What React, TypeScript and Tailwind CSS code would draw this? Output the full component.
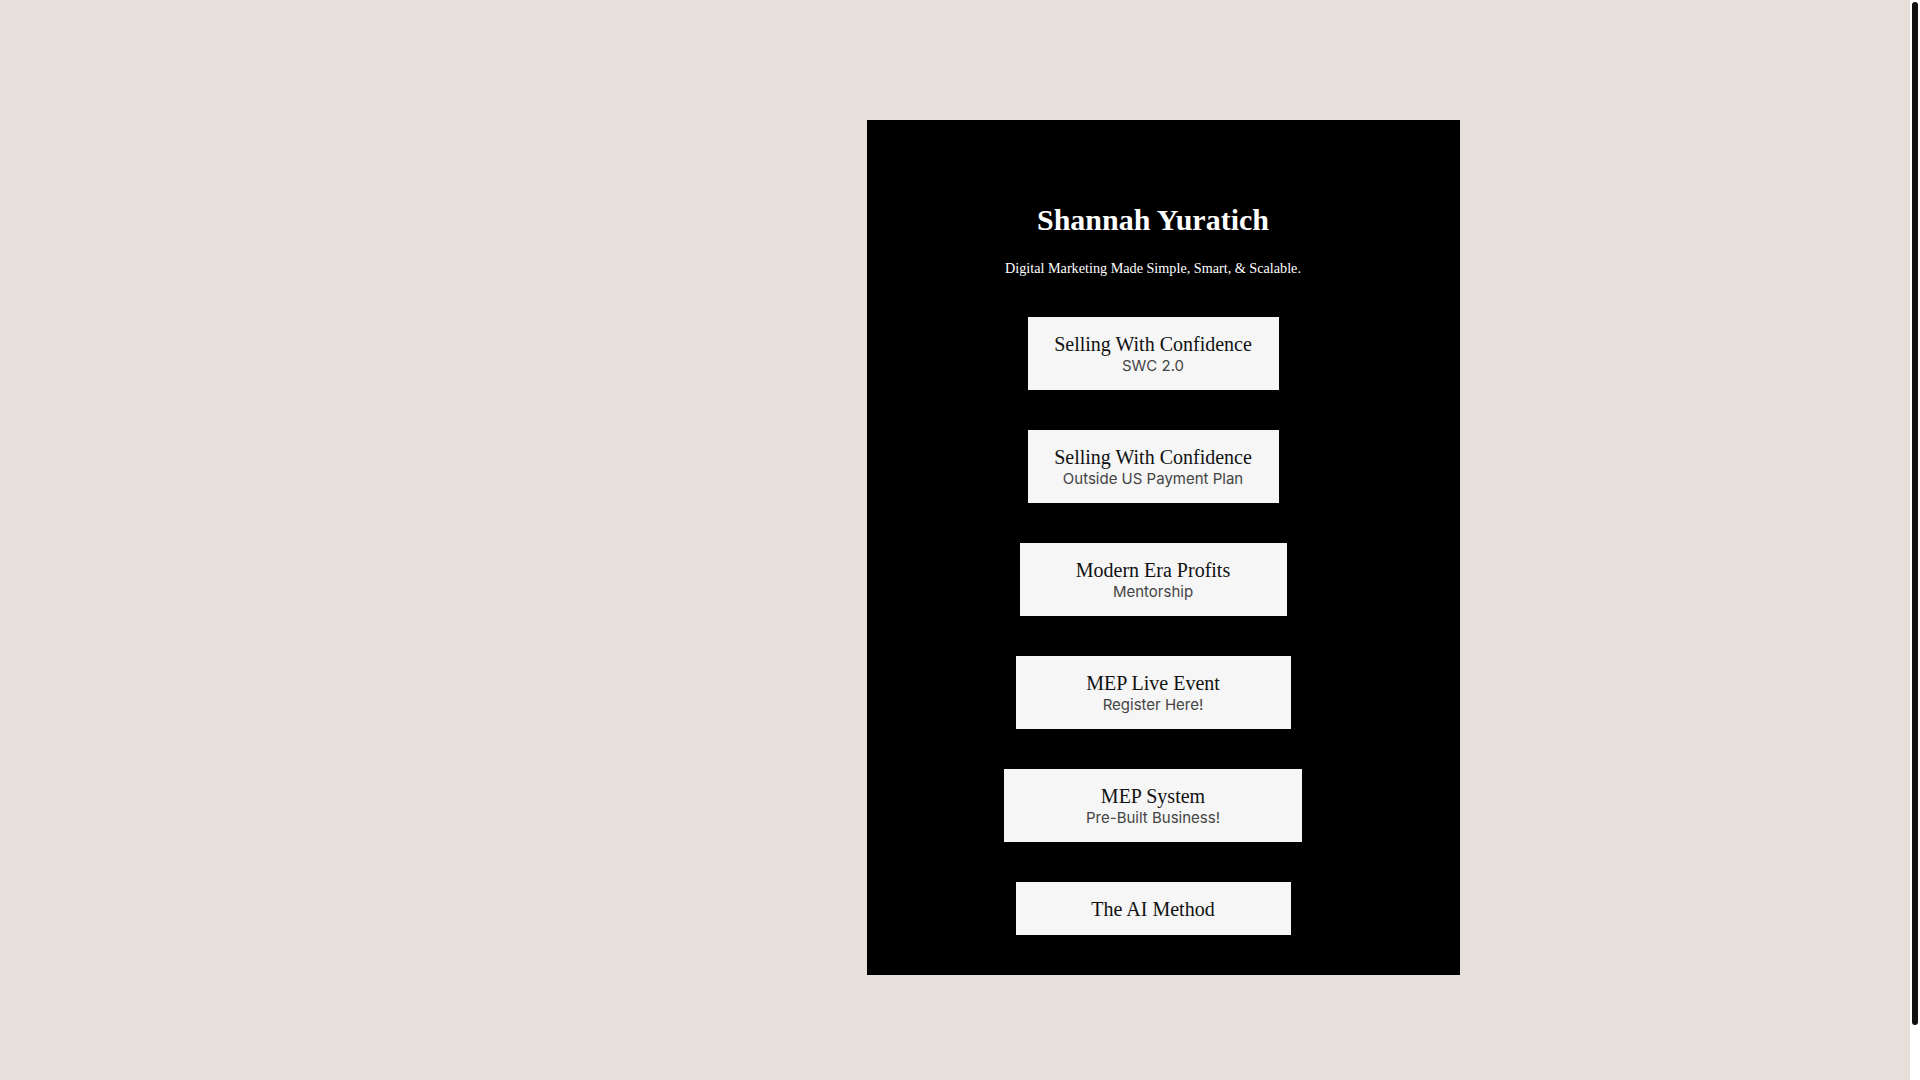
import React from "react";

type LinkItem = {
  title: string;
  subtitle?: string;
  width: string;
};

const links: LinkItem[] = [
  { title: "Selling With Confidence", subtitle: "SWC 2.0", width: "w-[251px]" },
  { title: "Selling With Confidence", subtitle: "Outside US Payment Plan", width: "w-[251px]" },
  { title: "Modern Era Profits", subtitle: "Mentorship", width: "w-[267px]" },
  { title: "MEP Live Event", subtitle: "Register Here!", width: "w-[275px]" },
  { title: "MEP System", subtitle: "Pre-Built Business!", width: "w-[298px]" },
  { title: "The AI Method", width: "w-[275px]" },
];

function LinkButton({ item }: { item: LinkItem }) {
  return (
    <a
      href="#"
      className={`${item.width} flex flex-col items-center bg-[#f6f6f6] py-[14.5px] text-center`}
    >
      <span className="font-['Liberation_Serif',serif] text-[20px] leading-6 text-[#111]">
        {item.title}
      </span>
      {item.subtitle && (
        <span className="font-['Inter',sans-serif] text-[15px] leading-5 text-[#444]">
          {item.subtitle}
        </span>
      )}
    </a>
  );
}

export default function App() {
  return (
    <div className="flex h-screen bg-[#e6dfda]">
      <main className="flex-1 overflow-hidden">
        <div className="pl-[867px] pt-[120px] pb-[165px]">
          <div className="w-[593px] bg-black pr-[21px] pt-[82px] pb-[40px]">
            <div className="flex flex-col items-center">
              <h1 className="font-['Liberation_Serif',serif] text-[30px] font-bold leading-9 text-white">
                Shannah Yuratich
              </h1>
              <p className="mt-[19px] font-['Liberation_Serif',serif] text-[14.2px] leading-[22px] text-white">
                Digital Marketing Made Simple, Smart, &amp; Scalable.
              </p>
              <div className="mt-[38px] flex flex-col items-center gap-10">
                {links.map((item, i) => (
                  <LinkButton key={i} item={item} />
                ))}
              </div>
            </div>
          </div>
        </div>
      </main>
      {/* page scrollbar */}
      <aside className="w-[10px] bg-white px-[2px] pt-[2px]">
        <div className="h-[1023px] rounded-full bg-[#111]" />
      </aside>
    </div>
  );
}
